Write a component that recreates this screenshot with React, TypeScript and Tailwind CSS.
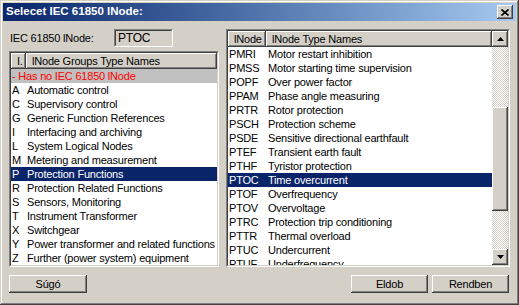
const groups: [string, string][] = [
  ["A", "Automatic control"],
  ["C", "Supervisory control"],
  ["G", "Generic Function References"],
  ["I", "Interfacing and archiving"],
  ["L", "System Logical Nodes"],
  ["M", "Metering and measurement"],
  ["P", "Protection Functions"],
  ["R", "Protection Related Functions"],
  ["S", "Sensors, Monitoring"],
  ["T", "Instrument Transformer"],
  ["X", "Switchgear"],
  ["Y", "Power transformer and related functions"],
  ["Z", "Further (power system) equipment"],
];

const nodes: [string, string][] = [
  ["PMRI", "Motor restart inhibition"],
  ["PMSS", "Motor starting time supervision"],
  ["POPF", "Over power factor"],
  ["PPAM", "Phase angle measuring"],
  ["PRTR", "Rotor protection"],
  ["PSCH", "Protection scheme"],
  ["PSDE", "Sensitive directional earthfault"],
  ["PTEF", "Transient earth fault"],
  ["PTHF", "Tyristor protection"],
  ["PTOC", "Time overcurrent"],
  ["PTOF", "Overfrequency"],
  ["PTOV", "Overvoltage"],
  ["PTRC", "Protection trip conditioning"],
  ["PTTR", "Thermal overload"],
  ["PTUC", "Undercurrent"],
  ["PTUF", "Underfrequency"],
];

const raised =
  "bg-[#d4d0c8] shadow-[inset_-1px_-1px_#404040,inset_1px_1px_#ffffff,inset_-2px_-2px_#808080]";

function Sunken({ className, children }: { className: string; children: React.ReactNode }) {
  return (
    <div className={`border border-t-[#808080] border-l-[#808080] border-b-white border-r-white ${className}`}>
      <div className="flex h-full w-full flex-col overflow-hidden border border-t-[#404040] border-l-[#404040] border-b-[#d4d0c8] border-r-[#d4d0c8] bg-white">
        {children}
      </div>
    </div>
  );
}

function HeaderCell({ className, children }: { className: string; children: React.ReactNode }) {
  return (
    <div className={`flex h-[16px] shrink-0 items-center pl-[6px] leading-[14px] ${raised} ${className}`}>
      {children}
    </div>
  );
}

function Btn({ label, className }: { label: string; className: string }) {
  return (
    <div className={`flex h-[18px] items-center justify-center ${raised} ${className}`}>{label}</div>
  );
}

function Arrow({ up }: { up?: boolean }) {
  return (
    <div className={`flex h-[16px] w-[16px] shrink-0 items-center justify-center ${raised}`}>
      <svg width="7" height="4" viewBox="0 0 7 4">
        <path d={up ? "M3.5 0 L7 4 L0 4 Z" : "M0 0 L7 0 L3.5 4 Z"} fill="#000" />
      </svg>
    </div>
  );
}

export default function App() {
  return (
    <div className="flex h-[305px] w-[519px] flex-col bg-[#d4d0c8] p-[3px] font-['Liberation_Sans',Arial,sans-serif] text-[11px] tracking-[-0.2px] text-black shadow-[inset_-1px_-1px_#404040,inset_1px_1px_#d4d0c8,inset_-2px_-2px_#808080,inset_2px_2px_#ffffff]">
      {/* title bar */}
      <div className="flex h-[18px] shrink-0 items-center justify-between bg-gradient-to-r from-[#0a246a] to-[#a6caf0] pl-[3px] pr-[3px]">
        <span className="text-[11.5px] font-bold tracking-normal text-white">Selecet IEC 61850 lNode:</span>
        <div className={`flex h-[14px] w-[16px] items-center justify-center ${raised}`}>
          <svg width="8" height="7" viewBox="0 0 8 7">
            <path d="M0.5 0.5 L7.5 6.5 M7.5 0.5 L0.5 6.5" stroke="#000" strokeWidth="1.6" />
          </svg>
        </div>
      </div>

      <div className="flex pl-[6px] pt-[8px]">
        {/* left column */}
        <div className="flex w-[210px] flex-col">
          <div className="flex h-[18px] items-center">
            <span className="w-[105px] pl-[1px]">IEC 61850 lNode:</span>
            <div className="h-[18px] w-[59px] border border-t-[#808080] border-l-[#808080] border-b-white border-r-white">
              <div className="flex h-full items-center border border-t-[#404040] border-l-[#404040] border-b-[#d4d0c8] border-r-[#d4d0c8] pl-[2px] text-[12px]">
                PTOC
              </div>
            </div>
          </div>

          <Sunken className="mt-[4px] h-[216px]">
            <div className="flex">
              <HeaderCell className="w-[15px]">I.</HeaderCell>
              <HeaderCell className="flex-1">lNode Groups Type Names</HeaderCell>
            </div>
            <div className="flex h-[14px] items-center bg-[#c0c0c0] pl-[1px] leading-[14px] text-[#ff0000]">
              - Has no IEC 61850 lNode
            </div>
            {groups.map(([k, name]) => {
              const sel = k === "P";
              return (
                <div
                  key={k}
                  className={`flex h-[14px] shrink-0 items-center leading-[14px] ${sel ? "bg-[#0a246a] text-white" : ""}`}
                >
                  <span className="w-[15px] pl-[1px]">{k}</span>
                  <span className="whitespace-nowrap pl-[1px]">{name}</span>
                </div>
              );
            })}
          </Sunken>

          <Btn label="Súgó" className="mt-[8px] w-[78px]" />
        </div>

        {/* right column */}
        <div className="ml-[7px] flex w-[284px] flex-col">
          <Sunken className="h-[238px]">
            <div className="flex h-full">
              <div className="flex min-w-0 flex-1 flex-col">
                <div className="flex">
                  <HeaderCell className="w-[38px] pl-[5px]">lNode</HeaderCell>
                  <HeaderCell className="flex-1">lNode Type Names</HeaderCell>
                </div>
                {nodes.map(([code, name]) => {
                  const sel = code === "PTOC";
                  return (
                    <div
                      key={code}
                      className={`flex h-[14px] shrink-0 items-center leading-[14px] ${sel ? "bg-[#0a246a] text-white" : ""}`}
                    >
                      <span className="w-[40px] shrink-0 pl-[1px]">{code}</span>
                      <span className="whitespace-nowrap">{name}</span>
                    </div>
                  );
                })}
              </div>
              {/* scrollbar */}
              <div className="flex w-[16px] shrink-0 flex-col">
                <Arrow up />
                <div className="flex flex-1 flex-col bg-[image:repeating-conic-gradient(#d4d0c8_0_25%,#ffffff_0_50%)] bg-[length:2px_2px]">
                  <div className="h-[60px]" />
                  <div className={`h-[104px] ${raised}`} />
                </div>
                <Arrow />
              </div>
            </div>
          </Sunken>

          <div className="mt-[8px] flex justify-end gap-[4px] pr-[1px]">
            <Btn label="Eldob" className="w-[77px]" />
            <Btn label="Rendben" className="w-[77px]" />
          </div>
        </div>
      </div>
    </div>
  );
}
